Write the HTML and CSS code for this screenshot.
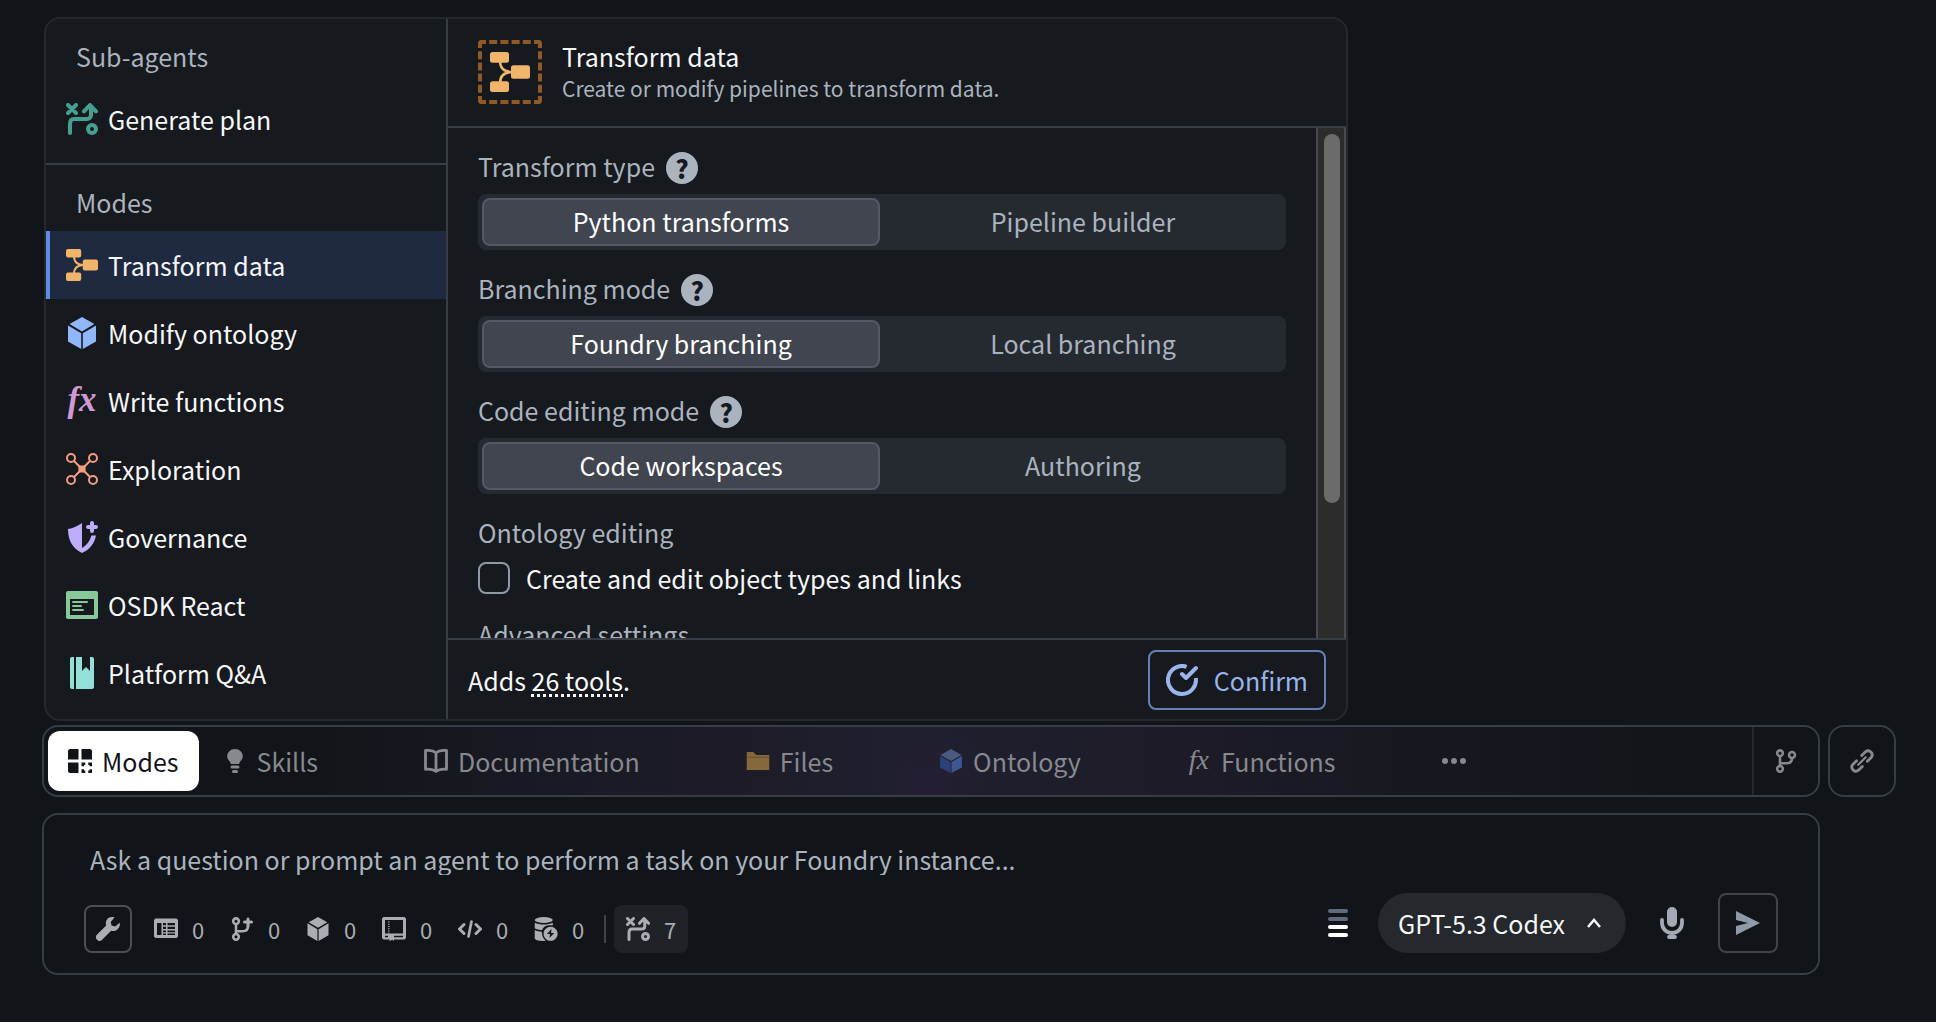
FILE: index.html
```html
<!DOCTYPE html>
<html lang="en">
<head>
    <meta charset="UTF-8">
    <meta name="viewport" content="width=device-width, initial-scale=1.0">
    <title>Agent modes</title>
    <link rel="stylesheet" href="styles.css">
</head>
<body>
    <!-- shared icons -->
    <svg class="sprite" aria-hidden="true">
        <symbol id="plan" viewBox="0 0 16 16">
            <g fill="none" stroke="currentColor" stroke-width="2" stroke-linecap="round" stroke-linejoin="round">
                <path d="M1 1l4 4M5 1L1 5M2 15v-4.5C2 9 2.7 8 4 8h6.5c1.200 0 2-.8 2-2V2M9 4.200L12 1l3 3.200"/>
                <circle cx="13" cy="13" r="2"/>
            </g>
        </symbol>
        <symbol id="transform" viewBox="0 0 16 16">
            <path d="M4 3.500c0 3 1.500 4.500 5 4.500M4 12.500C4 9.500 5.500 8 9 8" fill="none" stroke="currentColor"/>
            <rect width="7.600" height="4.300" rx="1" fill="currentColor"/>
            <rect y="11.700" width="7.600" height="4.300" rx="1" fill="currentColor"/>
            <rect x="8.400" y="5.300" width="7.600" height="5.400" rx="1" fill="currentColor"/>
        </symbol>
        <symbol id="cube" viewBox="0 0 16 16">
            <path d="M8 0l6.200 3.500L8 7.200 1.800 3.500zM1 4.200l6.600 3.900V16L1 12.200zM15 4.200v8L8.400 16V8.100z" fill="currentColor"/>
        </symbol>
        <symbol id="branch" viewBox="0 0 16 16">
            <g fill="none" stroke="currentColor" stroke-width="1.700">
                <circle cx="4" cy="2.800" r="1.900"/>
                <circle cx="4" cy="13.200" r="1.900"/>
                <path d="M4 4.700v6.600M4 9.500h4.500c2.200 0 3.500-1 3.500-3.500"/>
            </g>
        </symbol>
    </svg>

    <main class="agent">
        <section class="panel">
            <nav class="sidebar">
                <h2 class="sidebar-title">Sub-agents</h2>
                <button class="mode"><svg class="icon teal"><use href="#plan"/></svg>Generate plan</button>
                <div class="rule"></div>
                <h2 class="sidebar-title">Modes</h2>
                <button class="mode active"><svg class="icon orange"><use href="#transform"/></svg>Transform data</button>
                <button class="mode"><svg class="icon blue"><use href="#cube"/></svg>Modify ontology</button>
                <button class="mode"><span class="icon fx">fx</span>Write functions</button>
                <button class="mode">
                    <svg class="icon coral" viewBox="0 0 16 16">
                        <path d="M4 4l8 8M12 4l-8 8" stroke="currentColor"/>
                        <rect x="6.200" y="6.200" width="3.600" height="3.600" rx=".6" fill="currentColor"/>
                        <g fill="none" stroke="currentColor">
                            <circle cx="2.500" cy="2.500" r="2"/>
                            <circle cx="13.500" cy="2.500" r="2"/>
                            <circle cx="2.500" cy="13.500" r="2"/>
                            <circle cx="13.500" cy="13.500" r="2"/>
                        </g>
                    </svg>Exploration
                </button>
                <button class="mode">
                    <svg class="icon violet" viewBox="0 0 16 16">
                        <path d="M8 1v12.500c2.600-1.500 4-3.700 4.700-6.200L15 7.200C14.300 11 12 14.200 8 16 3 13.500 1 9.500 1 4c2.600-.4 5-1.500 7-3z" fill="currentColor"/>
                        <path d="M13 1v4M11 3h4" stroke="currentColor" stroke-width="2" stroke-linecap="round"/>
                    </svg>Governance
                </button>
                <button class="mode">
                    <svg class="icon green" viewBox="0 0 16 16">
                        <path fill-rule="evenodd" d="M1 1h14c.6 0 1 .4 1 1v12c0 .6-.4 1-1 1H1c-.6 0-1-.4-1-1V2c0-.6.4-1 1-1zm1 4v8h12V5z" fill="currentColor"/>
                        <path d="M3.500 6.500h7M3.500 8.500h4M3.500 10.500h5" stroke="currentColor" stroke-linecap="round"/>
                    </svg>OSDK React
                </button>
                <button class="mode">
                    <svg class="icon aqua" viewBox="0 0 16 16">
                        <path d="M3 0h1v16H3c-.6 0-1-.4-1-1V1c0-.6.400-1 1-1zM5 0h3v7l2-2 2 2V0h1c.6 0 1 .4 1 1v14c0 .6-.4 1-1 1H5z" fill="currentColor"/>
                    </svg>Platform Q&amp;A
                </button>
            </nav>

            <div class="details">
                <header class="details-header">
                    <div class="badge"><svg class="badge-icon"><use href="#transform"/></svg></div>
                    <div>
                        <h1 class="details-title">Transform data</h1>
                        <p class="details-text">Create or modify pipelines to transform data.</p>
                    </div>
                </header>
                <div class="details-body">
                    <div class="settings">
                        <div class="setting">
                            <div class="label">Transform type <button class="help" aria-label="About transform type">?</button></div>
                            <div class="segmented">
                                <button class="segment selected" aria-pressed="true">Python transforms</button>
                                <button class="segment" aria-pressed="false">Pipeline builder</button>
                            </div>
                        </div>
                        <div class="setting">
                            <div class="label">Branching mode <button class="help" aria-label="About branching mode">?</button></div>
                            <div class="segmented">
                                <button class="segment selected" aria-pressed="true">Foundry branching</button>
                                <button class="segment" aria-pressed="false">Local branching</button>
                            </div>
                        </div>
                        <div class="setting">
                            <div class="label">Code editing mode <button class="help" aria-label="About code editing mode">?</button></div>
                            <div class="segmented">
                                <button class="segment selected" aria-pressed="true">Code workspaces</button>
                                <button class="segment" aria-pressed="false">Authoring</button>
                            </div>
                        </div>
                        <div class="setting">
                            <div class="label">Ontology editing</div>
                            <label class="check"><input type="checkbox">Create and edit object types and links</label>
                        </div>
                        <div class="label">Advanced settings</div>
                    </div>
                    <div class="scrollbar"><div class="thumb"></div></div>
                </div>
                <footer class="details-footer">
                    <p>Adds <a class="tools-link" href="#">26 tools</a>.</p>
                    <button class="confirm">
                        <svg class="icon" viewBox="0 0 16 16" fill="none" stroke="currentColor" stroke-width="2" stroke-linecap="round" stroke-linejoin="round">
                            <path d="M10.300 1.400A7 7 0 1 0 14.900 7" stroke-linecap="butt"/>
                            <path d="M8 5l2 2 5-5"/>
                        </svg>
                        Confirm
                    </button>
                </footer>
            </div>
        </section>

        <div class="toolbar">
            <div class="tabs">
                <button class="tab current">
                    <svg class="small-icon" viewBox="0 0 16 16">
                        <path d="M1 0h6v7H0V1zM9 0h6l1 1v6H9zM0 9h7v7H1l-1-1z" fill="currentColor"/>
                        <path d="M9.800 11.500V9.800h1.700M13.500 9.800h1.700v1.700M15.200 13.500v1.700h-1.700M11.500 15.200H9.800v-1.700" fill="none" stroke="currentColor" stroke-width="1.600"/>
                        <path d="M11.700 11.700h1.600v1.600h-1.600z" fill="none"/>
                    </svg>Modes
                </button>
                <div class="tab-list">
                    <button class="tab">
                        <svg class="small-icon" viewBox="0 0 16 16" fill="currentColor">
                            <path d="M8 0c3 0 5.200 2.200 5.200 4.900 0 2.600-2.200 3.300-2.400 5.100H5.200C5 8.200 2.800 7.500 2.800 4.900 2.800 2.200 5 0 8 0z"/>
                            <rect x="5" y="11" width="6" height="2" rx="1"/>
                            <rect x="6" y="14" width="4" height="2" rx="1"/>
                        </svg>Skills
                    </button>
                    <button class="tab">
                        <svg class="small-icon" viewBox="0 0 16 16" fill="none" stroke="currentColor" stroke-width="1.900" stroke-linejoin="round">
                            <path d="M8 2.500C6 .8 3.500.8 1 1v12.500c2.500-.2 5-.2 7 1.500 2-1.700 4.500-1.700 7-1.500V1c-2.500-.2-5-.2-7 1.500zM8 2.500V15"/>
                        </svg>Documentation
                    </button>
                    <button class="tab">
                        <svg class="small-icon" viewBox="0 0 16 16">
                            <path d="M.5 2h4.300l2 2h8.700v10H.5z" fill="#86693a"/>
                            <path d="M.5 5.500h15" stroke="#6b532c" stroke-width=".8"/>
                        </svg>Files
                    </button>
                    <button class="tab">
                        <svg class="small-icon" viewBox="0 0 16 16">
                            <path d="M8 0l7 4-7 4-7-4z" fill="#4a5a80"/>
                            <path d="M.7 4.600l7 4V16l-7-3.700z" fill="#2b4277"/>
                            <path d="M15.300 4.600l-7 4V16l7-3.700z" fill="#3c5791"/>
                        </svg>Ontology
                    </button>
                    <button class="tab"><span class="small-icon small-fx">fx</span>Functions</button>
                    <button class="tab" aria-label="More">
                        <svg class="small-icon" viewBox="0 0 16 16" fill="currentColor">
                            <circle cx="2" cy="8" r="2"/><circle cx="8" cy="8" r="2"/><circle cx="14" cy="8" r="2"/>
                        </svg>
                    </button>
                </div>
                <button class="branch-button" aria-label="Branch">
                    <svg class="small-icon"><use href="#branch"/><circle cx="18" cy="6" r="3" fill="none" stroke="currentColor" stroke-width="2.500"/></svg>
                </button>
            </div>
            <button class="link-button" aria-label="Copy link">
                <svg class="small-icon" viewBox="0 0 16 16" fill="none" stroke="currentColor" stroke-width="1.900" stroke-linecap="round">
                    <path d="M7.800 4.400l2.500-2.500a2.700 2.700 0 0 1 3.800 3.800l-2.500 2.500M8.200 11.600l-2.500 2.500a2.700 2.700 0 0 1-3.800-3.800l2.500-2.500"/>
                    <path d="M5.500 10.500l5-5" stroke-width="1.500"/>
                </svg>
            </button>

            <form class="prompt">
                <textarea class="prompt-input" rows="1" aria-label="Prompt" placeholder="Ask a question or prompt an agent to perform a task on your Foundry instance..."></textarea>
                <div class="prompt-row">
                    <div class="counts">
                        <button type="button" class="wrench" aria-label="Tools">
                            <svg class="small-icon" viewBox="0 0 16 16">
                                <path d="M15.800 3.800l-3 2.600-2.400-.7-.6-2.400L12.300.4C10.300-.4 8 .3 7 2.200c-.6 1.100-.6 2.300-.2 3.400L.7 11.700a2.100 2.100 0 0 0 3.400 3.500l6-6.100c1.300.5 2.900.2 4.100-.8 1.400-1.200 2-2.900 1.600-4.500z" fill="currentColor"/>
                            </svg>
                        </button>
                        <button type="button" class="count" aria-label="Tables">
                            <svg class="small-icon" viewBox="0 0 16 16">
                                <path fill-rule="evenodd" d="M1 1h14l1 1v11l-1 1H1l-1-1V2zm1 3v8h3V4zm4 0v1.500h8V4zm0 2.500V8h8V6.500zM6 9v1.200h8V9zm0 2v1h8v-1z" fill="currentColor"/>
                                <path d="M8.500 4v8" stroke="currentColor"/>
                            </svg>0
                        </button>
                        <button type="button" class="count" aria-label="Branches">
                            <svg class="small-icon"><use href="#branch"/><path d="M18 2v7M14.500 5h7" stroke="currentColor" stroke-width="3" stroke-linecap="round"/></svg>0
                        </button>
                        <button type="button" class="count" aria-label="Objects"><svg class="small-icon"><use href="#cube"/></svg>0</button>
                        <button type="button" class="count" aria-label="Notebooks">
                            <svg class="small-icon" viewBox="0 0 16 16">
                                <path fill-rule="evenodd" d="M1 0h14l1 1v13l-1 1H8v1l-1.200-.8L5 16v-1H1l-1-1V1zm1 2v9h12V2zm0 10.500v1h2v-1zm6 0v1h6v-1z" fill="currentColor"/>
                                <path d="M4.500 3v8" stroke="currentColor" stroke-dasharray=".7 .8"/>
                            </svg>0
                        </button>
                        <button type="button" class="count" aria-label="Code">
                            <svg class="small-icon" viewBox="0 0 16 16" fill="none" stroke="currentColor" stroke-width="2" stroke-linecap="round" stroke-linejoin="round">
                                <path d="M4 5L1 8l3 3M12 5l3 3-3 3"/>
                                <path d="M9 3L7 13" stroke-width="1.800"/>
                            </svg>0
                        </button>
                        <button type="button" class="count" aria-label="Data sources">
                            <svg class="small-icon" viewBox="0 0 16 16" fill="currentColor">
                                <ellipse cx="6.500" cy="2" rx="6" ry="2"/>
                                <path d="M.5 3.800c3 1.600 9 1.600 12 0v1.800C8.500 5 6 6.500 5.500 8.700 3.500 8.700 1.500 8.300.5 7.500zM.5 8.700c1.300.7 3 1.100 4.700 1.100 0 2.600 1 4.600 2.600 6C5 16.200 1.500 15.800.5 14.500z"/>
                                <path fill-rule="evenodd" d="M11 6.500a4.700 4.700 0 1 0 .1 0zM11.700 8l-.3 2.700h2.100L10.300 14l.4-2.600H8.600z"/>
                            </svg>0
                        </button>
                        <span class="separator"></span>
                        <button type="button" class="plan-count" aria-label="Plan"><svg class="small-icon"><use href="#plan"/></svg>7</button>
                    </div>
                    <div class="actions">
                        <button type="button" class="effort" aria-label="Reasoning effort">
                            <span class="bar"></span><span class="bar"></span><span class="bar full"></span><span class="bar full"></span>
                        </button>
                        <div class="model">
                            <select class="model-select" aria-label="Model"><option>GPT-5.3 Codex</option></select>
                            <svg class="model-caret" viewBox="0 0 16 16"><path d="M2 12l6-7 6 7" fill="none" stroke="currentColor" stroke-width="2.500"/></svg>
                        </div>
                        <button type="button" class="mic" aria-label="Dictate">
                            <svg class="icon" viewBox="0 0 16 16">
                                <rect x="5.500" width="5" height="10" rx="2.500" fill="currentColor"/>
                                <path d="M3 6.500V8a5 5 0 0 0 10 0V6.500M8 13v2M6.500 15h3" fill="none" stroke="currentColor" stroke-width="1.900" stroke-linecap="round"/>
                            </svg>
                        </button>
                        <button class="send" aria-label="Send">
                            <svg class="small-icon" viewBox="0 0 16 16"><path d="M0 0l16 8L0 16v-6l8-2-8-2z" fill="currentColor"/></svg>
                        </button>
                    </div>
                </div>
            </form>
        </div>
    </main>
</body>
</html>
```
FILE: styles.css
```css
*{
    box-sizing: border-box;
}
body{
    margin: 0;
    background-color: #111418;
    color: #f6f7f9;
    font-family: "Noto Sans CJK SC", "Noto Sans", sans-serif;
    font-size: 25px;
    line-height: 32px;
}
h1, h2, p{
    margin: 0;
    font-weight: 400;
}
button, select, textarea{
    margin: 0;
    padding: 0;
    border: none;
    background: none;
    color: inherit;
    font: inherit;
}
button{
    display: flex;
    align-items: center;
    cursor: pointer;
}
.sprite{
    display: none;
}
.icon{
    width: 32px;
    height: 32px;
    flex: none;
}
.small-icon{
    width: 24px;
    height: 24px;
    flex: none;
}
.agent{
    padding: 17px 40px 40px 42px;
}

/* mode picker */
.panel{
    display: grid;
    grid-template-columns: 402px 1fr;
    max-width: 1304px;
    margin-left: 2px;
    border: 2px solid #25282d;
    border-radius: 16px;
    background-color: #16191d;
    overflow: hidden;
}
.sidebar{
    padding-bottom: 12px;
    border-right: 2px solid #383c44;
}
.sidebar-title{
    height: 66px;
    padding: 21px 30px 0;
    color: #abb3bf;
    font-size: 25px;
}
.mode{
    width: 100%;
    height: 68px;
    gap: 10px;
    padding: 0 16px;
    border-left: 4px solid transparent;
}
.mode.active{
    border-left-color: #5c8ce8;
    background-color: #1f2a41;
}
.rule{
    margin-top: 10px;
    border-top: 2px solid #383c44;
}
.teal{ color: #46a091; }
.orange{ color: #f0b56a; }
.blue{ color: #8fb7fa; }
.coral{ color: #f39c82; }
.violet{ color: #bdadfa; }
.green{ color: #87c89b; }
.aqua{ color: #92e0d8; }
.fx, .small-fx{
    font-family: "Liberation Serif", serif;
    font-style: italic;
    text-align: center;
}
.fx{
    color: #cf9ad3;
    font-size: 35px;
    font-weight: 700;
    line-height: 30px;
}

.details{
    display: flex;
    flex-direction: column;
    min-width: 0;
}
.details-header{
    display: flex;
    align-items: flex-start;
    gap: 20px;
    height: 109px;
    padding: 21px 30px;
    border-bottom: 2px solid #383c44;
}
.badge{
    display: flex;
    align-items: center;
    justify-content: center;
    width: 64px;
    height: 64px;
    border: 4px dashed #8f5a24;
    border-radius: 4px;
}
.badge-icon{
    width: 40px;
    height: 40px;
    color: #f0b56a;
}
.details-title{
    font-size: 25px;
    line-height: 32px;
}
.details-text{
    color: #abb3bf;
    font-size: 21px;
}
.details-body{
    display: flex;
    flex-grow: 1;
    height: 0;
}
.settings{
    display: flex;
    flex-direction: column;
    gap: 24px;
    flex: 1;
    padding: 24px 30px 0;
    overflow: hidden;
}
.setting{
    display: flex;
    flex-direction: column;
    gap: 10px;
}
.label{
    display: flex;
    align-items: flex-start;
    gap: 11px;
    min-height: 32px;
    color: #abb3bf;
    line-height: 28px;
}
.help{
    justify-content: center;
    width: 32px;
    height: 32px;
    border-radius: 50%;
    background-color: #abb3bf;
    color: #16191d;
    font-weight: 900;
}
.segmented{
    display: grid;
    grid-template-columns: 1fr 1fr;
    gap: 4px;
    padding: 4px;
    border-radius: 8px;
    background-color: #252a31;
}
.segment{
    justify-content: center;
    height: 48px;
    padding-bottom: 2px;
    border: 2px solid transparent;
    border-radius: 8px;
    color: #abb3bf;
}
.segment.selected{
    border-color: #535965;
    background-color: #404550;
    color: #fff;
}
.check{
    display: flex;
    align-items: center;
    gap: 16px;
    height: 36px;
}
.check input{
    appearance: none;
    width: 32px;
    height: 32px;
    margin: 0;
    border: 2px solid #8f99a8;
    border-radius: 8px;
}
.check input:checked{
    background-color: #5c8ce8;
}
.scrollbar{
    width: 30px;
    padding: 6px 4px 6px 6px;
    border: solid #4a4a4a;
    border-width: 0 2px;
    background-color: #2c2c2c;
}
.thumb{
    width: 16px;
    height: 74%;
    border-radius: 8px;
    background-color: #6b6b6b;
}
.details-footer{
    display: flex;
    align-items: center;
    justify-content: space-between;
    height: 81px;
    padding: 0 20px;
    border-top: 2px solid #383c44;
}
.tools-link{
    color: inherit;
    text-decoration: underline dotted 3px;
    text-underline-offset: 3px;
    text-decoration-skip-ink: none;
}
.confirm{
    gap: 16px;
    height: 60px;
    padding: 0 16px;
    border: 2px solid #6680b3;
    border-radius: 8px;
    color: #99b5ec;
}

/* toolbar and prompt */
.toolbar{
    display: grid;
    grid-template-columns: 1fr 68px;
    gap: 16px 8px;
    margin-top: 4px;
}
.tabs{
    display: flex;
    height: 72px;
    border: 2px solid #383c44;
    border-radius: 16px;
    background: radial-gradient(circle 60px at 50% 85%, #251e33, transparent), linear-gradient(to right, #111418 14%, #171a22 26%, #1e1c28 40%, #1e2030 48%, #1e1c28 62%, #15181f 80%, #111418 94%);
    color: #87898f;
}
.tab{
    gap: 10px;
}
.tab.current{
    margin: 4px;
    padding: 0 20px;
    border-radius: 12px;
    background-color: #fff;
    color: #111418;
}
.tab-list{
    display: flex;
    flex: 1;
    gap: 106px;
    padding-left: 20px;
}
.small-fx{
    font-size: 28px;
    line-height: 22px;
}
.branch-button{
    justify-content: center;
    width: 66px;
    border-left: 2px solid #25282d;
}
.link-button{
    justify-content: center;
    border: 2px solid #383c44;
    border-radius: 16px;
    color: #87898f;
}
.prompt{
    padding: 28px 40px 20px;
    border: 2px solid #383c44;
    border-radius: 16px;
}
.prompt-input{
    display: block;
    width: 100%;
    height: 32px;
    padding: 0 6px;
    outline: none;
    resize: none;
    overflow: hidden;
}
.prompt-input::placeholder{
    color: #abb3bf;
    opacity: 1;
}
.prompt-row{
    display: flex;
    align-items: flex-end;
    justify-content: space-between;
    margin-top: 18px;
}
.counts, .actions{
    display: flex;
    align-items: center;
}
.counts{
    color: #abadb1;
    font-size: 22px;
}
.wrench{
    justify-content: center;
    width: 48px;
    height: 48px;
    margin-right: 22px;
    border: 2px solid #4b4e52;
    border-radius: 8px;
}
.count, .plan-count{
    gap: 14px;
}
.count{
    width: 76px;
}
.separator{
    width: 2px;
    height: 28px;
    margin: 0 8px 0 -6px;
    background-color: #404348;
}
.plan-count{
    height: 48px;
    padding: 0 12px;
    border-radius: 8px;
    background-color: #1f2226;
}
.effort{
    flex-direction: column;
    gap: 4px;
    margin-right: 30px;
}
.bar{
    width: 20px;
    height: 4px;
    border-radius: 2px;
    background-color: #5f6b7c;
}
.bar.full{
    background-color: #fff;
}
.model{
    position: relative;
    margin-right: 30px;
}
.model-select{
    appearance: none;
    height: 60px;
    padding: 0 60px 0 20px;
    border-radius: 30px;
    background-color: #25282c;
}
.model-caret{
    position: absolute;
    right: 24px;
    top: 22px;
    width: 16px;
    height: 16px;
    pointer-events: none;
}
.mic{
    margin-right: 30px;
    color: #a5a9b3;
}
.send{
    justify-content: center;
    width: 60px;
    height: 60px;
    border: 2px solid #404348;
    border-radius: 8px;
    color: #8f99a8;
}
```
